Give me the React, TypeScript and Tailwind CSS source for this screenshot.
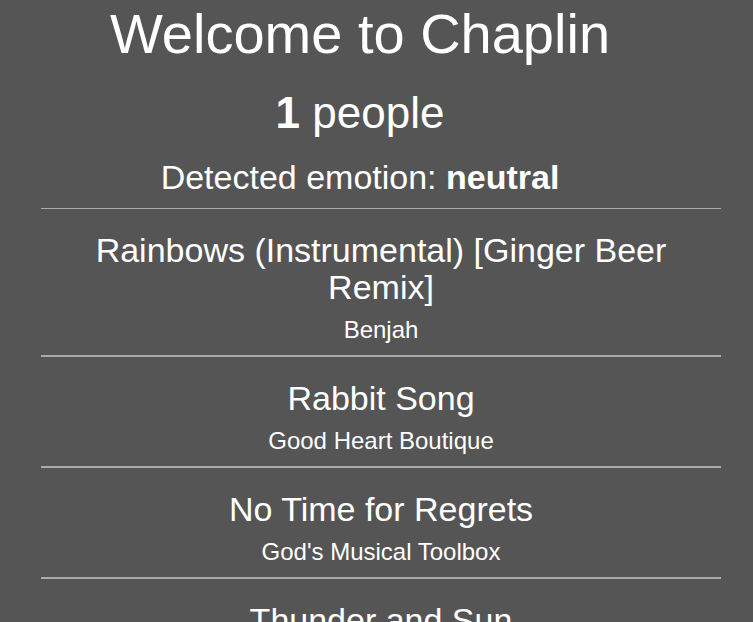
import React from "react";

type Song = { title: string; artist?: string };

const songs: Song[] = [
  { title: "Rainbows (Instrumental) [Ginger Beer Remix]", artist: "Benjah" },
  { title: "Rabbit Song", artist: "Good Heart Boutique" },
  { title: "No Time for Regrets", artist: "God's Musical Toolbox" },
  { title: "Thunder and Sun" },
];

export default function App() {
  return (
    <div className="min-h-screen bg-[#555555] text-white font-['Liberation_Sans',Arial,sans-serif] overflow-hidden">
      <div className="w-[720px] text-center">
        <h1 className="pt-[2px] text-[56px] leading-[64px] font-normal">Welcome to Chaplin</h1>
        <h2 className="mt-[22px] text-[44px] leading-[50px] font-normal">
          <span className="font-bold">1</span> people
        </h2>
        <p className="mt-[20px] text-[34px] leading-[39px]">
          Detected emotion: <span className="font-bold">neutral</span>
        </p>
      </div>
      <div className="ml-[41px] w-[680px] mt-[11px] border-t border-[#aaaaaa]" />
      <ul className="ml-[41px] w-[680px]">
        {songs.map((s) => (
          <li key={s.title} className="pt-[23px] pb-[11px] border-b-2 border-[#aaaaaa] text-center">
            <div className="text-[34px] leading-[37px]">{s.title}</div>
            {s.artist && <div className="mt-[10px] text-[24px] leading-[28px]">{s.artist}</div>}
          </li>
        ))}
      </ul>
    </div>
  );
}
